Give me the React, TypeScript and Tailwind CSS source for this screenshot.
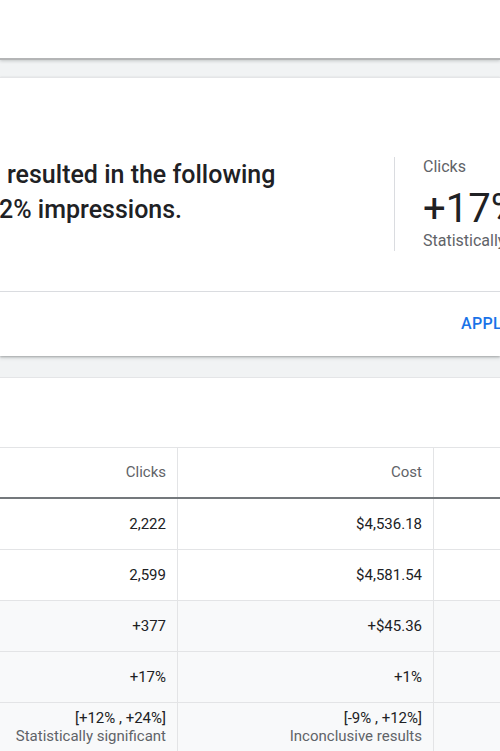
import React from "react";

const font = { fontFamily: "Roboto, 'Noto Sans', Arial, sans-serif" };

function Cell({ children, className = "" }: { children: React.ReactNode; className?: string }) {
  return (
    <div className={`flex flex-col items-end pr-[11px] border-r border-[#e3e4e6] whitespace-nowrap ${className}`}>
      {children}
    </div>
  );
}

export default function App() {
  const rows: { a: React.ReactNode; b: React.ReactNode; shaded: boolean }[] = [
    { a: "2,222", b: "$4,536.18", shaded: false },
    { a: "2,599", b: "$4,581.54", shaded: false },
    { a: "+377", b: "+$45.36", shaded: true },
    { a: "+17%", b: "+1%", shaded: true },
  ];
  return (
    <div style={font} className="w-[500px] h-[751px] overflow-hidden bg-[#f1f3f4] text-[#202124]">
      {/* top card */}
      <div className="h-[60px] bg-white border-b-2 border-[#b4b5b6] shadow-[0_1px_3px_rgba(60,64,67,0.25)]" />

      {/* summary card */}
      <div className="mt-[17px] bg-white border-t border-[#e4e5e7] shadow-[0_1px_2px_rgba(60,64,67,0.35),0_2px_4px_rgba(60,64,67,0.15)]">
        <div className="h-[213px] flex items-start pt-[79px]">
          <div className="w-[394px] shrink-0 text-[25px] leading-[35px] font-medium text-[#202124] whitespace-nowrap overflow-hidden">
            <div className="pl-[7px]">resulted in the following</div>
            <div className="-ml-[1px]">2% impressions.</div>
          </div>
          <div className="h-[94px] shrink-0 border-l border-[#dadce0] pl-[28px] whitespace-nowrap">
            <div className="text-[16px] leading-[20px] text-[#5f6368]">Clicks</div>
            <div className="mt-[9px] text-[40px] leading-[45px] text-[#202124]">+17%</div>
            <div className="text-[16px] leading-[20px] text-[#5f6368]">Statistically significant</div>
          </div>
        </div>
        <div className="h-[65px] border-t border-[#dadce0] flex items-center pl-[461px]">
          <span className="text-[16px] font-medium tracking-[0.3px] text-[#1a73e8] whitespace-nowrap">APPLY</span>
        </div>
      </div>

      {/* table card */}
      <div className="mt-[21px] bg-white border-t border-[#e4e5e7] pt-[69px]">
        <div className="grid grid-cols-[178px_256px_1fr] h-[50px] border-t border-[#e3e4e6] text-[15px] text-[#5f6368]">
          <Cell className="justify-center">Clicks</Cell>
          <Cell className="justify-center">Cost</Cell>
          <div />
        </div>
        <div className="h-[2px] bg-[#74787c]" />
        {rows.map((r, i) => (
          <div
            key={i}
            className={`grid grid-cols-[178px_256px_1fr] h-[51px] border-b border-[#e3e4e6] text-[15px] text-[#202124] ${r.shaded ? "bg-[#f8f9fa]" : "bg-white"}`}
          >
            <Cell className="justify-center">{r.a}</Cell>
            <Cell className="justify-center">{r.b}</Cell>
            <div />
          </div>
        ))}
        <div className="grid grid-cols-[178px_256px_1fr] h-[60px] text-[15px] bg-[#f8f9fa]">
          <Cell className="justify-start pt-[6px]">
            <div className="leading-[18px] text-[#202124]">[+12% , +24%]</div>
            <div className="leading-[18px] text-[#5f6368]">Statistically significant</div>
          </Cell>
          <Cell className="justify-start pt-[6px]">
            <div className="leading-[18px] text-[#202124]">[-9% , +12%]</div>
            <div className="leading-[18px] text-[#5f6368]">Inconclusive results</div>
          </Cell>
          <div />
        </div>
      </div>
    </div>
  );
}
